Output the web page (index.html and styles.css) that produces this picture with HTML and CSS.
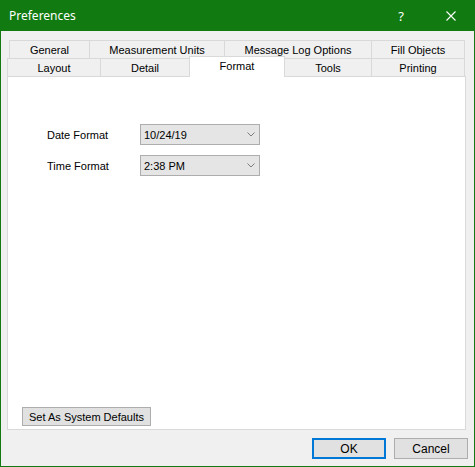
FILE: index.html
```html
<!DOCTYPE html>
<html>
<head>
<meta charset="utf-8">
<link rel="stylesheet" href="styles.css">
</head>
<body>
<div class="window">
  <div class="titlebar">
    <span class="title">Preferences</span>
    <span class="help">?</span>
    <span class="close">
      <svg width="10" height="10" viewBox="0 0 10 10"><path d="M0.5 0.5 L9.5 9.5 M9.5 0.5 L0.5 9.5" stroke="#fff" stroke-width="1.1" fill="none"/></svg>
    </span>
  </div>
  <div class="client">
    <div class="tabs">
      <div class="tabrow row1">
        <div class="tab w-general">General</div>
        <div class="tab w-units">Measurement Units</div>
        <div class="tab w-log">Message Log Options</div>
        <div class="tab w-fill">Fill Objects</div>
      </div>
      <div class="tabrow row2">
        <div class="tab w-layout">Layout</div>
        <div class="tab w-detail">Detail</div>
        <div class="tab selected w-format">Format</div>
        <div class="tab w-tools">Tools</div>
        <div class="tab w-printing">Printing</div>
      </div>
    </div>
    <div class="panel">
      <div class="fields">
        <div class="field">
          <span class="label">Date Format</span>
          <div class="combo"><span>10/24/19</span>
            <svg class="chev" width="8" height="5" viewBox="0 0 8 5"><path d="M0.5 0.5 L4 4 L7.5 0.5" stroke="#707070" stroke-width="0.9" fill="none"/></svg>
          </div>
        </div>
        <div class="field">
          <span class="label">Time Format</span>
          <div class="combo"><span>2:38 PM</span>
            <svg class="chev" width="8" height="5" viewBox="0 0 8 5"><path d="M0.5 0.5 L4 4 L7.5 0.5" stroke="#707070" stroke-width="0.9" fill="none"/></svg>
          </div>
        </div>
      </div>
      <div class="panel-foot">
        <button class="btn defaults">Set As System Defaults</button>
      </div>
    </div>
    <div class="actions">
      <button class="btn action ok">OK</button>
      <button class="btn action">Cancel</button>
    </div>
  </div>
</div>
</body>
</html>
```

FILE: styles.css
```css
* { box-sizing: border-box; }
html, body { margin: 0; padding: 0; }
body {
  width: 475px;
  height: 467px;
  overflow: hidden;
  font-family: "Liberation Sans", Arial, sans-serif;
  font-size: 11px;
  color: #000;
}
.window {
  width: 475px;
  height: 467px;
  border: 1px solid #117a11;
  display: flex;
  flex-direction: column;
  background: #f0f0f0;
}
.titlebar {
  height: 30px;
  background: #117a11;
  color: #fff;
  display: flex;
  align-items: center;
  padding-left: 8px;
  font-family: "Noto Sans", "Open Sans", sans-serif;
  font-size: 12px;
}
.title { flex: 1; padding-bottom: 1px; }
.help { width: 10px; text-align: center; margin-right: 40px; font-size: 13px; }
.close { width: 10px; height: 10px; display: flex; margin-right: 18px; }
.client {
  flex: 1;
  display: flex;
  flex-direction: column;
  padding: 9px 8px 0 6px;
}
.tabs { display: flex; flex-direction: column; }
.tabrow { display: flex; height: 18px; }
.row1 { margin-left: 2px; }
.tab {
  height: 18px;
  border: 1px solid #d9d9d9;
  border-bottom: none;
  background: #f0f0f0;
  margin-left: -1px;
  display: flex;
  align-items: center;
  justify-content: center;
  padding-top: 1px;
}
.tab:first-child { margin-left: 0; }
.w-general { width: 81px; }
.w-units { width: 136px; }
.w-log { width: 148px; }
.w-fill { width: 94px; }
.w-layout { width: 94px; }
.w-detail { width: 90px; }
.w-format { width: 96px; }
.w-tools { width: 88px; }
.w-printing { width: 94px; }
.tab.selected {
  background: #fff;
  height: 21px;
  margin-top: -2px;
  position: relative;
  z-index: 1;
  align-items: flex-start;
  padding-top: 3px;
}
.panel {
  width: 459px;
  height: 354px;
  background: #fff;
  border: 1px solid #d9d9d9;
  display: flex;
  flex-direction: column;
}
.fields {
  display: flex;
  flex-direction: column;
  gap: 10px;
  padding: 47px 0 0 39px;
}
.field { display: flex; align-items: center; height: 21px; }
.label { width: 93px; }
.combo {
  width: 120px;
  height: 21px;
  background: #e5e5e5;
  border: 1px solid #adadad;
  display: flex;
  align-items: center;
  justify-content: space-between;
  padding: 0 4px 0 3px;
}
.panel-foot {
  margin-top: auto;
  padding: 0 0 3px 14px;
}
.btn {
  font-family: "Liberation Sans", Arial, sans-serif;
  font-size: 11px;
  color: #000;
  background: #e1e1e1;
  border: 1px solid #adadad;
  border-radius: 0;
  padding: 0;
  margin: 0;
}
.defaults { width: 129px; height: 19px; }
.actions {
  display: flex;
  justify-content: flex-end;
  gap: 8px;
  padding: 8px 0 0 0;
  margin-right: -2px;
}
.action { width: 74px; height: 21px; font-size: 12px; }
.ok { border: 2px solid #0078d7; }
```
